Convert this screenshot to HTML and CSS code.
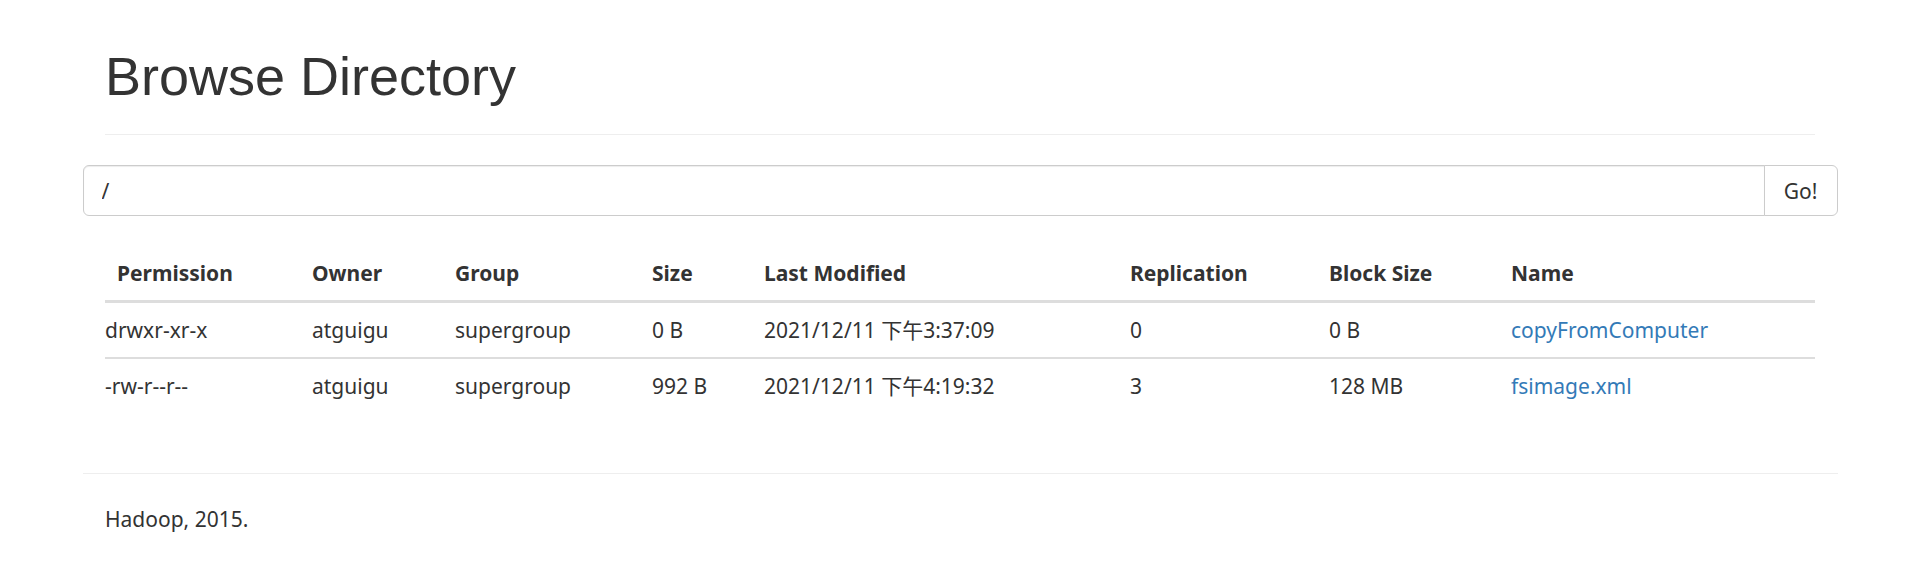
FILE: index.html
```html
<!DOCTYPE html>
<html lang="en">
<head>
<meta charset="utf-8">
<title>Browse Directory</title>
<link rel="stylesheet" href="styles.css">
</head>
<body>
<div class="container">
  <div class="page-header">
    <h1>Browse Directory</h1>
  </div>
  <form class="search">
    <input class="path-input" type="text" value="/">
    <button class="go-btn" type="button">Go!</button>
  </form>
  <table class="listing">
    <thead>
      <tr>
        <th class="c-perm">Permission</th>
        <th class="c-owner">Owner</th>
        <th class="c-group">Group</th>
        <th class="c-size">Size</th>
        <th class="c-mod">Last Modified</th>
        <th class="c-rep">Replication</th>
        <th class="c-block">Block Size</th>
        <th class="c-name">Name</th>
      </tr>
    </thead>
    <tbody>
      <tr>
        <td class="first">drwxr-xr-x</td>
        <td>atguigu</td>
        <td>supergroup</td>
        <td>0 B</td>
        <td>2021/12/11 下午3:37:09</td>
        <td>0</td>
        <td>0 B</td>
        <td><a class="link" href="#">copyFromComputer</a></td>
      </tr>
      <tr>
        <td class="first">-rw-r--r--</td>
        <td>atguigu</td>
        <td>supergroup</td>
        <td>992 B</td>
        <td>2021/12/11 下午4:19:32</td>
        <td>3</td>
        <td>128 MB</td>
        <td><a class="link" href="#">fsimage.xml</a></td>
      </tr>
    </tbody>
  </table>
  <div class="footer">
    <p class="footer-text">Hadoop, 2015.</p>
  </div>
</div>
</body>
</html>
```
FILE: styles.css
```css
* { box-sizing: border-box; }

html, body {
  margin: 0;
  padding: 0;
  background: #fff;
}

body {
  font-family: "Noto Sans", "Noto Sans CJK SC", sans-serif;
  font-size: 21px;
  line-height: 30px;
  color: #333;
}

.container {
  width: 1755px;
  margin: 0 auto;
  padding: 0 22.5px;
}

.page-header {
  margin: 0 0 30px;
  padding-bottom: 13.5px;
  border-bottom: 1px solid #eee;
}

.page-header h1 {
  margin: 46.5px 0 15px;
  font-family: "Liberation Sans", Arial, sans-serif;
  font-size: 54px;
  font-weight: normal;
  line-height: 1.1;
  color: #333;
}

.search {
  display: flex;
  margin: 0 -22.5px 30px;
  height: 51px;
}

.path-input {
  flex: 1;
  min-width: 0;
  height: 51px;
  padding: 9px 18px;
  font-family: "Noto Sans", "Noto Sans CJK SC", sans-serif;
  font-size: 21px;
  line-height: 30px;
  color: #333;
  background: #fff;
  border: 1px solid #ccc;
  border-radius: 6px 0 0 6px;
  box-shadow: inset 0 1px 1px rgba(0, 0, 0, .075);
  outline: none;
}

.go-btn {
  width: 74px;
  height: 51px;
  margin-left: -1px;
  padding: 9px 0;
  font-family: "Noto Sans", "Noto Sans CJK SC", sans-serif;
  font-size: 21px;
  line-height: 30px;
  color: #333;
  background: #fff;
  border: 1px solid #ccc;
  border-radius: 0 6px 6px 0;
}

.listing {
  width: 100%;
  table-layout: fixed;
  border-collapse: collapse;
  margin-bottom: 59.5px;
}

.listing th {
  text-align: left;
  font-weight: bold;
  padding: 12px;
  line-height: 30px;
  border-bottom: 3px solid #ddd;
  vertical-align: bottom;
}

.listing td {
  padding: 12px;
  line-height: 30px;
  border-top: 2px solid #ddd;
  white-space: nowrap;
}

.listing td.first { padding-left: 0; }

.c-perm { width: 195px; }
.c-owner { width: 143px; }
.c-group { width: 197px; }
.c-size { width: 112px; }
.c-mod { width: 366px; }
.c-rep { width: 199px; }
.c-block { width: 182px; }
.c-name { width: auto; }

.link {
  color: #337ab7;
  text-decoration: none;
}

.footer {
  margin: 0 -22.5px;
  padding: 30px 22.5px;
  border-top: 1px solid #eee;
}

.footer-text {
  margin: 0;
}
```
